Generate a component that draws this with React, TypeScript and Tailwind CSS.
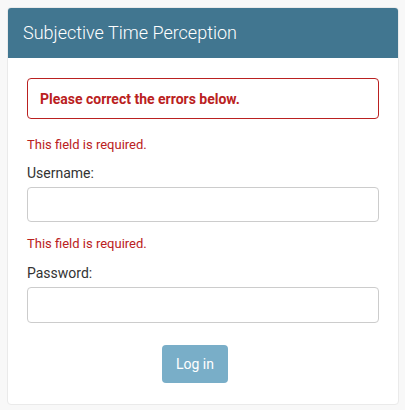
import React from "react";

export default function App() {
  return (
    <div className="min-h-[410px] w-[405px] bg-[#f8f8f8] pt-[7px] px-[7px] font-['Roboto',_'Liberation_Sans',_sans-serif]">
      <div className="w-[392px] rounded-[4px] border border-[#eaeaea] bg-white overflow-hidden">
        <div className="h-[50px] bg-[#417690] flex items-center pl-[15px]">
          <h1 className="text-[18px] font-light text-white leading-none">Subjective Time Perception</h1>
        </div>
        <div className="px-[19px] pt-[20px] pb-[21px]">
          <div className="h-[41px] rounded-[4px] border border-[#ba2121] flex items-center pl-[12px]">
            <p className="text-[14px] font-bold text-[#ba2121] leading-none">Please correct the errors below.</p>
          </div>
          <p className="mt-[18px] text-[13px] leading-[16px] text-[#ba2121]">This field is required.</p>
          <label className="block mt-[11px] text-[14px] leading-[18px] text-[#333]">Username:</label>
          <input type="text" className="mt-[5px] block w-full h-[35px] rounded-[4px] border border-[#ccc] bg-white outline-none" />
          <p className="mt-[14px] text-[13px] leading-[16px] text-[#ba2121]">This field is required.</p>
          <label className="block mt-[12px] text-[14px] leading-[18px] text-[#333]">Password:</label>
          <input type="password" className="mt-[5px] block w-full h-[36px] rounded-[4px] border border-[#ccc] bg-white outline-none" />
          <div className="mt-[22px] flex pl-[135px]">
            <button className="h-[38px] w-[66px] rounded-[4px] bg-[#79aec8] text-white text-[14px]">Log in</button>
          </div>
        </div>
      </div>
    </div>
  );
}
